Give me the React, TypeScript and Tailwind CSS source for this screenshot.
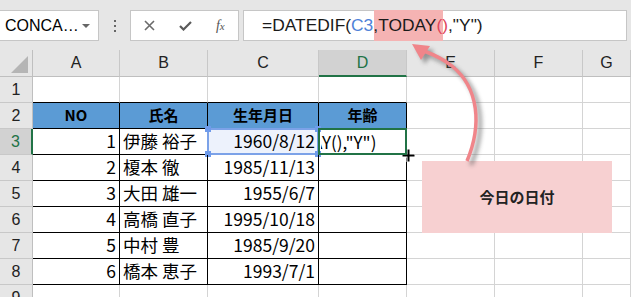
import React from "react";

const people = [
  { no: 1, name: "伊藤 裕子", born: "1960/8/12" },
  { no: 2, name: "榎本 徹", born: "1985/11/13" },
  { no: 3, name: "大田 雄一", born: "1955/6/7" },
  { no: 4, name: "高橋 直子", born: "1995/10/18" },
  { no: 5, name: "中村 豊", born: "1985/9/20" },
  { no: 6, name: "橋本 恵子", born: "1993/7/1" },
];

const letters = ["A", "B", "C", "D", "E", "F", "G"];
const jp = "font-['Noto_Sans_CJK_JP','Noto_Sans',sans-serif]";
const ui = "font-['Liberation_Sans','Noto_Sans_CJK_JP',sans-serif]";

function FormulaBar() {
  return (
    <div className="flex h-[50px] items-start bg-[#e6e6e6] pt-[10px]">
      <div className={`flex h-[31px] w-[99px] items-center justify-between border border-l-0 border-[#c6c6c6] bg-white pl-[5px] pr-[8px] text-[16px] text-black ${ui}`}>
        <span>CONCA…</span>
        <span className="h-0 w-0 border-x-[4px] border-t-[4px] border-x-transparent border-t-[#666]" />
      </div>
      <div className="flex h-[31px] w-[31px] flex-col items-center justify-center gap-[3px]">
        <span className="h-[2px] w-[2px] bg-[#666]" />
        <span className="h-[2px] w-[2px] bg-[#666]" />
        <span className="h-[2px] w-[2px] bg-[#666]" />
      </div>
      <div className="flex h-[31px] w-[109px] items-center border border-[#c6c6c6] bg-white">
        <div className="flex w-[37px] justify-center">
          <svg width="11" height="11" viewBox="0 0 11 11">
            <path d="M1 1L10 10M10 1L1 10" stroke="#6b6b6b" strokeWidth="1.6" />
          </svg>
        </div>
        <div className="flex w-[36px] justify-center">
          <svg width="13" height="10" viewBox="0 0 13 10">
            <path d="M1 5L4.5 8.5L12 1" stroke="#5a5a5a" strokeWidth="2.2" fill="none" />
          </svg>
        </div>
        <div className="flex w-[36px] justify-center font-['Liberation_Serif',serif] text-[14px] italic text-[#555]">
          <span>f</span>
          <span className="mt-[3px] text-[11px]">x</span>
        </div>
      </div>
      <div className={`relative ml-[4px] flex h-[31px] w-[384px] items-center border border-[#c6c6c6] bg-white pl-[18px] text-[17.4px] text-[#1a1a1a] ${ui}`}>
        <span className="absolute left-[130px] top-[-1px] h-[31px] w-[69px] bg-[#f5b3b3]" />
        <span className="relative">
          =DATEDIF(<span className="text-[#4f82d8]">C3</span>,TODAY<span className="text-[#e0455a]">()</span>,"Y")
        </span>
      </div>
    </div>
  );
}

function cellBorder(r: number, c: number) {
  const inTable = r >= 2 && r <= 8 && c <= 3;
  const topEdge = r === 1 && c <= 3;
  if (inTable) return "border-r border-b border-r-black border-b-black";
  if (topEdge) return "border-r border-b border-r-[#d4d4d4] border-b-black";
  return "border-r border-b border-[#d4d4d4]";
}

function DataCell({ r, c }: { r: number; c: number }) {
  const base = `relative flex items-center overflow-visible ${cellBorder(r, c)}`;
  if (r === 2 && c <= 3) {
    const labels = ["NO", "氏名", "生年月日", "年齢"];
    return (
      <div className={`${base} justify-center bg-[#5b9bd5] text-[15px] font-bold text-black ${jp}`}>
        {labels[c]}
      </div>
    );
  }
  const p = r >= 3 && r <= 8 ? people[r - 3] : null;
  if (p && c === 0) {
    return <div className={`${base} justify-end pr-[3px] text-[17.5px] text-black ${jp}`}>{p.no}</div>;
  }
  if (p && c === 1) {
    return <div className={`${base} justify-start pl-[3px] text-[17.5px] text-black ${jp}`}>{p.name}</div>;
  }
  if (p && c === 2) {
    const selected = r === 3;
    return (
      <div className={`${base} justify-end pr-[3px] text-[17.5px] text-black ${jp} ${selected ? "bg-[#edf2fc]" : ""}`}>
        {selected && (
          <>
            <span className="absolute -bottom-[1px] -left-[1px] -right-[1px] -top-[1px] border-2 border-[#7ca2e8]" />
            <span className="absolute -left-[3px] -top-[3px] h-[6px] w-[6px] bg-[#6f9beb]" />
            <span className="absolute -right-[3px] -top-[3px] h-[6px] w-[6px] bg-[#6f9beb]" />
            <span className="absolute -bottom-[3px] -left-[3px] h-[6px] w-[6px] bg-[#6f9beb]" />
            <span className="absolute -bottom-[3px] -right-[3px] h-[6px] w-[6px] bg-[#6f9beb]" />
          </>
        )}
        <span className="relative">{p.born}</span>
      </div>
    );
  }
  if (r === 3 && c === 3) {
    return (
      <div className={`${base} justify-start text-[17px] text-black ${jp}`}>
        <div className="ml-[2px] flex h-full w-full items-center overflow-hidden">
          <span className="-ml-[9px] whitespace-pre">AY(),"Y")</span>
        </div>
        <span className="absolute -bottom-[1px] -left-[1px] -right-[1px] -top-[1px] z-10 border-2 border-[#217346]" />
      </div>
    );
  }
  return <div className={base} />;
}

function Sheet() {
  const rows = [1, 2, 3, 4, 5, 6, 7, 8, 9];
  return (
    <div className="grid h-[247px] grid-cols-[33px_87px_88px_111px_88px_88px_88px_48px] grid-rows-[27px_repeat(9,26px)] overflow-hidden bg-white">
      <div className="relative border-b border-r border-[#bfbfbf] bg-[#e6e6e6]">
        <span className="absolute bottom-[3px] right-[4px] h-0 w-0 border-b-[17px] border-l-[17px] border-b-[#b5b5b5] border-l-transparent" />
      </div>
      {letters.map((l) =>
        l === "D" ? (
          <div
            key={l}
            className={`flex items-center justify-center border-b-2 border-r border-b-[#217346] border-r-[#c8c8c8] bg-[#d2d2d2] text-[16px] text-[#217346] ${ui}`}
          >
            {l}
          </div>
        ) : (
          <div
            key={l}
            className={`flex items-center justify-center border-b border-r border-b-[#bfbfbf] border-r-[#c8c8c8] bg-[#e6e6e6] text-[16px] text-[#222] ${ui}`}
          >
            {l}
          </div>
        )
      )}
      {rows.map((r) => (
        <React.Fragment key={r}>
          {r === 3 ? (
            <div className={`flex items-center justify-center border-b border-r-2 border-b-[#c8c8c8] border-r-[#217346] bg-[#d2d2d2] text-[16px] text-[#217346] ${ui}`}>
              {r}
            </div>
          ) : (
            <div className={`flex items-center justify-center border-b border-r border-b-[#c8c8c8] border-r-[#bfbfbf] bg-[#e6e6e6] text-[16px] text-[#222] ${ui}`}>
              {r}
            </div>
          )}
          {[0, 1, 2, 3, 4, 5, 6].map((c) => (
            <DataCell key={c} r={r} c={c} />
          ))}
        </React.Fragment>
      ))}
    </div>
  );
}

export default function App() {
  return (
    <div className="relative h-[297px] w-[631px] overflow-hidden bg-white">
      <FormulaBar />
      <Sheet />

      {/* callout */}
      <div className={`absolute left-[422px] top-[161px] flex h-[72px] w-[190px] items-center justify-center bg-[#f7d0d1] text-[15px] font-bold text-[#222] ${jp}`}>
        今日の日付
      </div>

      {/* arrow */}
      <svg className="pointer-events-none absolute left-0 top-0" width="631" height="297">
        <defs>
          <filter id="sh" x="-20%" y="-20%" width="140%" height="140%">
            <feGaussianBlur stdDeviation="2" />
          </filter>
        </defs>
        <g transform="translate(4 4)" filter="url(#sh)" opacity="0.6">
          <path d="M467 161 C482 125 479 88 452 66 C442 58 432 54 424 51" stroke="#5e5e5e" strokeWidth="4" fill="none" />
          <polygon points="412,44 430,46 421,60" fill="#5e5e5e" />
        </g>
        <path d="M467 161 C482 125 479 88 452 66 C442 58 432 54 424 51" stroke="#f0858a" strokeWidth="3.5" fill="none" />
        <polygon points="412,44 430,46 421,60" fill="#f0858a" />
      </svg>

      {/* fill cursor */}
      <svg className="pointer-events-none absolute left-[401px] top-[148px]" width="15" height="15" viewBox="0 0 15 15">
        <path d="M7.5 1V14M1 7.5H14" stroke="white" strokeWidth="4" />
        <path d="M7.5 1.5V13.5M1.5 7.5H13.5" stroke="black" strokeWidth="2" />
      </svg>
    </div>
  );
}
